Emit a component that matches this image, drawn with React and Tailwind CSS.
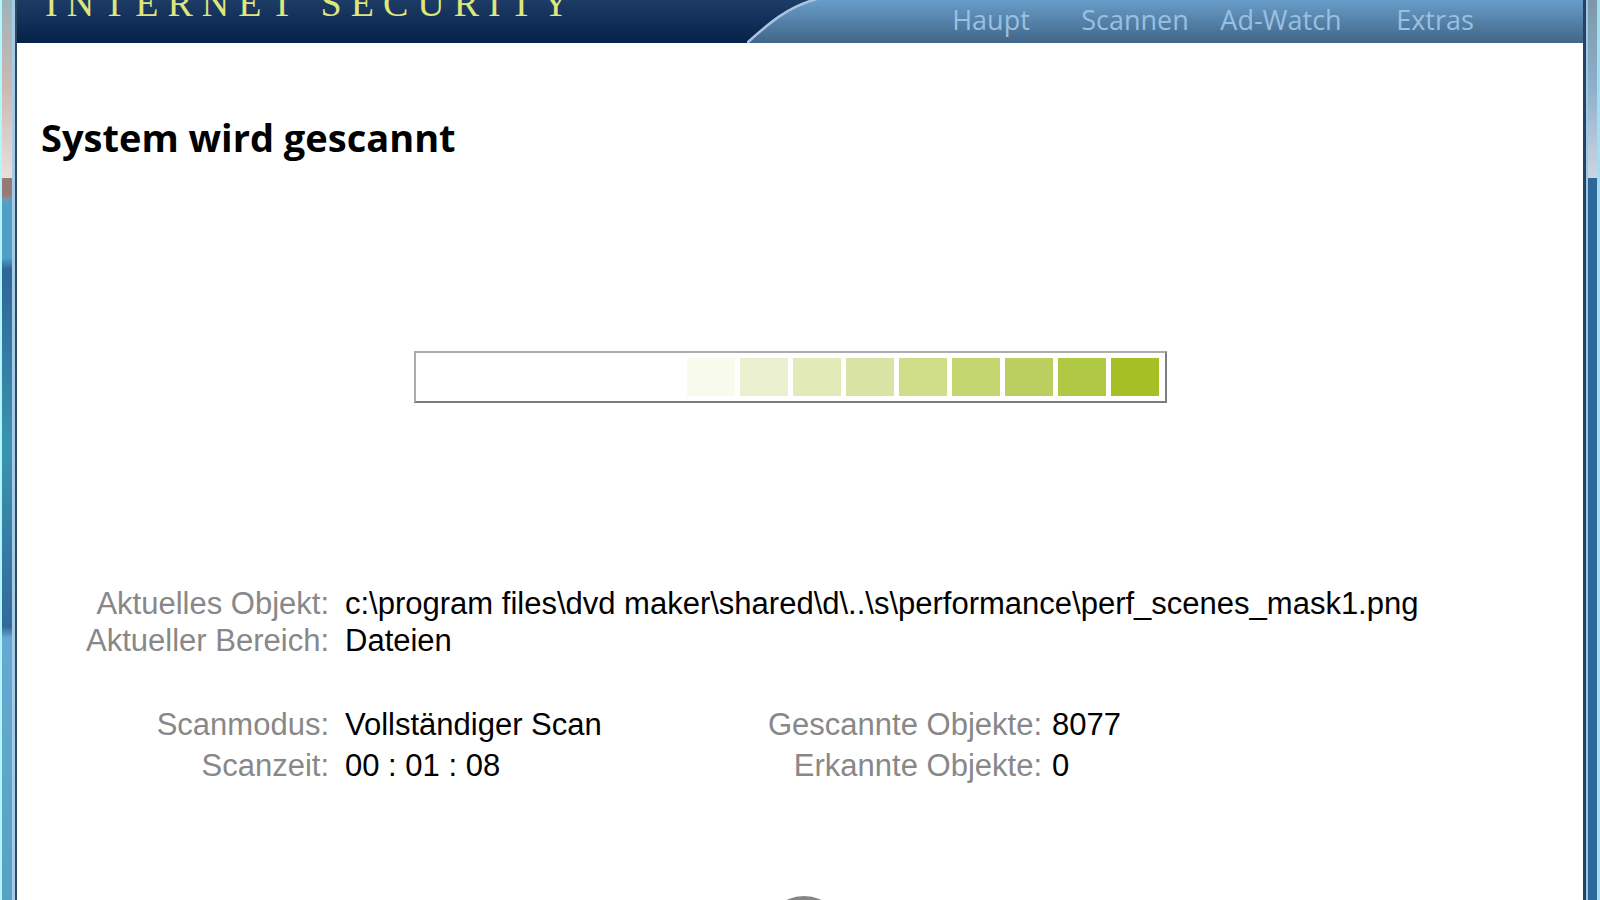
import React from "react";

const tabs = [
  { name: "Haupt", width: "w-36" },
  { name: "Scannen", width: "w-36" },
  { name: "Ad-Watch", width: "w-[148px]" },
  { name: "Extras", width: "w-40" },
];

const blocks = [
  "bg-[#f7faec]",
  "bg-[#ebf1d0]",
  "bg-[#e2eab8]",
  "bg-[#d9e4a4]",
  "bg-[#cfdd88]",
  "bg-[#c4d670]",
  "bg-[#bacf5f]",
  "bg-[#b0c945]",
  "bg-[#a5bf24]",
];

const Header = () => (
  <header className="flex h-[43px] items-end overflow-hidden bg-linear-to-b from-[#1d3c66] to-[#06214a]">
    <div className="w-[730px] shrink-0 pl-7 pb-[21px]">
      <span className="font-['Liberation_Serif',serif] text-[38px] leading-9 tracking-[9px] whitespace-nowrap text-[#dfe67c]">
        INTERNET SECURITY
      </span>
    </div>
    <svg className="h-[43px] w-[76px] shrink-0" viewBox="0 0 76 43" aria-hidden="true">
      <defs>
        <linearGradient id="nav" x1="0" y1="0" x2="0" y2="43" gradientUnits="userSpaceOnUse">
          <stop offset="0" stopColor="#699dc9" />
          <stop offset="1" stopColor="#416688" />
        </linearGradient>
      </defs>
      <path d="M0 43 C22 23 42 6 70 0 H76 V43 Z" fill="url(#nav)" />
      <path d="M0 43 C22 23 42 6 70 -1" fill="none" stroke="#a9c5de" strokeWidth="2.5" />
    </svg>
    <nav className="flex h-full flex-1 items-center justify-end bg-linear-to-b from-[#699dc9] to-[#416688] pr-[68px] pb-1">
      {tabs.map((tab) => (
        <button key={tab.name} className={`${tab.width} text-center font-['Open_Sans',sans-serif] text-[27px] leading-8 text-[#98c0e2]`}>
          {tab.name}
        </button>
      ))}
    </nav>
  </header>
);

const ScanProgress = () => (
  <div
    role="progressbar"
    aria-label="System wird gescannt"
    className="ml-[397px] flex h-[52px] w-[753px] items-center justify-end gap-[5px] border-2 border-t-[#acacac] border-r-[#7c7c80] border-b-[#7c7c80] border-l-[#acacac] pr-[6px]"
  >
    {blocks.map((color) => (
      <div key={color} className={`h-[38px] w-12 ${color}`} />
    ))}
  </div>
);

const Row = ({ label, value, gap }) => (
  <div className={`flex whitespace-nowrap ${gap}`}>
    <dt className="w-[312px] text-right text-[#888888]">{label}</dt>
    <dd className="text-black">{value}</dd>
  </div>
);

export default function App() {
  return (
    <div className="flex h-screen overflow-hidden bg-white">
      {/* linker Fensterrahmen */}
      <div className="w-[2px] bg-[#b0f6fc]" />
      <div className="flex w-[10px] flex-col">
        <div className="h-[178px] bg-linear-to-b from-[#9db3bb] via-[#ccb9b2] to-[#e8e0dc]" />
        <div className="h-6 bg-linear-to-b from-[#967a73] from-70% to-[#56a2c7]" />
        <div className="h-[56px] bg-[#509fc7]" />
        <div className="h-[190px] bg-linear-to-b from-[#509fc7] via-[#2f6598] via-[6%] to-[#3b94b0]" />
        <div className="h-[190px] bg-linear-to-b from-[#3b94b0] via-[#33689a] via-[94%] to-[#66a9d2]" />
        <div className="flex-1 bg-linear-to-b from-[#66a9d2] to-[#55a2c4]" />
      </div>
      <div className="w-[3px] bg-[#a6cbe6]" />
      <div className="w-[2px] bg-[#2f4a5e]" />

      <div className="flex min-w-0 flex-1 flex-col">
        <Header />
        <main className="flex flex-1 flex-col font-['Liberation_Sans',sans-serif] text-[31px]">
          <h1 className="mt-[68px] pl-6 font-['Open_Sans',sans-serif] text-[38px] leading-[52px] font-bold text-black">
            System wird gescannt
          </h1>
          <div className="mt-[188px]">
            <ScanProgress />
          </div>

          <dl className="mt-[182px] leading-[37px]">
            <Row label="Aktuelles Objekt:" value="c:\program files\dvd maker\shared\d\..\s\performance\perf_scenes_mask1.png" gap="gap-4" />
            <Row label="Aktueller Bereich:" value="Dateien" gap="gap-4" />
          </dl>

          <div className="mt-[45px] flex leading-[41px]">
            <dl className="w-[713px]">
              <Row label="Scanmodus:" value="Vollständiger Scan" gap="gap-4" />
              <Row label="Scanzeit:" value="00 : 01 : 08" gap="gap-4" />
            </dl>
            <dl>
              <Row label="Gescannte Objekte:" value="8077" gap="gap-2.5" />
              <Row label="Erkannte Objekte:" value="0" gap="gap-2.5" />
            </dl>
          </div>

          <div className="mt-auto flex justify-center pl-2">
            <svg className="h-1 w-20" viewBox="0 0 80 4" aria-hidden="true">
              <circle cx="40" cy="40" r="40" fill="#858585" />
            </svg>
          </div>
        </main>
      </div>

      {/* rechter Fensterrahmen */}
      <div className="w-[3px] bg-[#25435f]" />
      <div className="w-[2px] bg-[#9cc8ea]" />
      <div className="flex w-[9px] flex-col">
        <div className="h-[178px] bg-linear-to-b from-[#7c98a8] via-[#8fb0cb] to-[#ccd6e4]" />
        <div className="flex-1 bg-[#2e6799]" />
      </div>
      <div className="w-[3px] bg-[#a4dcf2]" />
    </div>
  );
}
